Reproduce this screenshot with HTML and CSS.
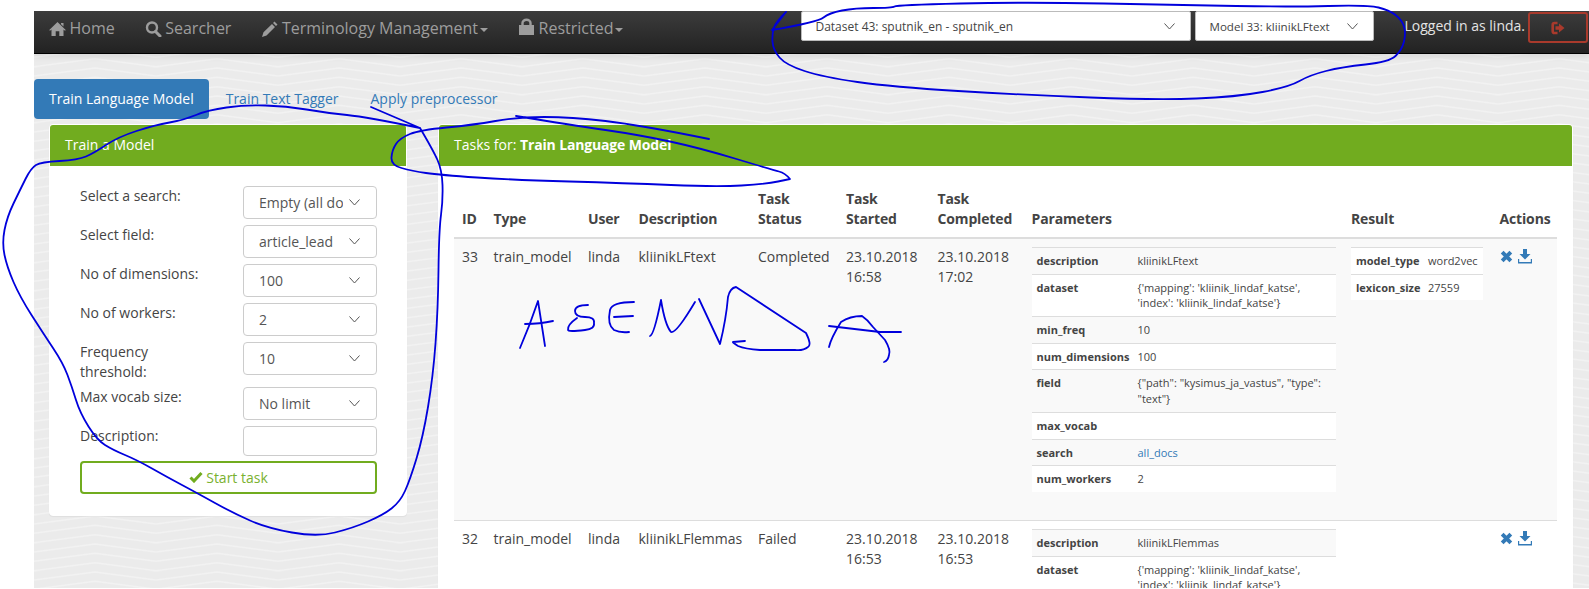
FILE: index.html
```html
<!DOCTYPE html>
<html lang="en">
<head>
<meta charset="utf-8">
<title>Train Language Model</title>
<link rel="stylesheet" href="styles.css">
</head>
<body>
<div class="app">
  <nav class="navbar">
    <ul class="nav-list">
      <li class="nav-item"><svg class="nav-icon" viewBox="0 0 17 16"><path d="M8.5 1 17 9.2 15.6 9.4 14.5 8.6V15H10.3V10.3H6.7V15H2.5V8.6L1.4 9.4 0 9.2 8.5 1ZM12 2H14.5V5.5L12 3.2Z"/></svg>Home</li>
      <li class="nav-item"><svg class="nav-icon" viewBox="0 0 17 16"><circle cx="7" cy="6.5" r="5" fill="none" stroke-width="2.4"/><path d="M10.5 10.5 15 15" fill="none" stroke-width="3" stroke-linecap="round"/></svg>Searcher</li>
      <li class="nav-item"><svg class="nav-icon" viewBox="0 0 17 16"><path d="M13.5 .5 16.5 3.5 15 5 12 2ZM11 3 14 6 5.5 14.5 1 16 2.5 11.2Z"/></svg>Terminology Management<span class="caret"></span></li>
      <li class="nav-item"><svg class="nav-icon nav-icon-lock" viewBox="0 0 17 16"><path d="M1 6H16V16H1Z"/><path d="M4.500 6V4A4 3.200 0 0 1 12.500 4V6" fill="none" stroke-width="2.400"/></svg>Restricted<span class="caret"></span></li>
    </ul>
    <div class="nav-right">
      <select class="nav-select nav-select-dataset"><option>Dataset 43: sputnik_en - sputnik_en</option></select>
      <select class="nav-select nav-select-model"><option>Model 33: kliinikLFtext</option></select>
      <span class="nav-user">Logged in as linda.</span>
      <button class="logout" type="button"><svg class="logout-icon" viewBox="0 0 14 14"><path d="M6.500 2H3.500A1.800 1.800 0 0 0 1.700 3.800V10.200A1.800 1.800 0 0 0 3.500 12H6.500" fill="none" stroke-width="2.600"/><path d="M4.500 5.300H8V2.500L13.500 7 8 11.500V8.700H4.500Z" stroke="none"/></svg></button>
    </div>
  </nav>

  <ul class="pills">
    <li class="pill pill-active">Train Language Model</li>
    <li class="pill">Train Text Tagger</li>
    <li class="pill">Apply preprocessor</li>
  </ul>

  <div class="columns">
    <section class="panel panel-form">
      <h2 class="panel-head">Train a Model</h2>
      <form class="form">
        <label class="form-label">Select a search:</label>
        <div class="form-field"><select class="control"><option>Empty (all docs)</option></select></div>
        <label class="form-label">Select field:</label>
        <div class="form-field"><select class="control"><option>article_lead</option></select></div>
        <label class="form-label">No of dimensions:</label>
        <div class="form-field"><select class="control"><option>100</option></select></div>
        <label class="form-label">No of workers:</label>
        <div class="form-field"><select class="control"><option>2</option></select></div>
        <label class="form-label">Frequency threshold:</label>
        <div class="form-field"><select class="control"><option>10</option></select></div>
        <label class="form-label">Max vocab size:</label>
        <div class="form-field"><select class="control"><option>No limit</option></select></div>
        <label class="form-label form-label-last">Description:</label>
        <div class="form-field form-field-last"><input class="control control-input" type="text"></div>
        <button class="start" type="button"><svg class="start-icon" viewBox="0 0 14 12"><path d="M1.500 6.500 5 10 12.500 2" fill="none" stroke-width="3"/></svg>Start task</button>
      </form>
    </section>

    <section class="panel panel-tasks">
      <h2 class="panel-head">Tasks for: <strong>Train Language Model</strong></h2>
      <div class="panel-body">
        <table class="tasks">
          <colgroup>
            <col class="c-id"><col class="c-type"><col class="c-user"><col class="c-desc"><col class="c-status"><col class="c-started"><col class="c-completed"><col class="c-params"><col class="c-result"><col class="c-actions">
          </colgroup>
          <thead>
            <tr><th>ID</th><th>Type</th><th>User</th><th>Description</th><th>Task Status</th><th>Task Started</th><th>Task Completed</th><th>Parameters</th><th>Result</th><th>Actions</th></tr>
          </thead>
          <tbody>
            <tr class="row-odd">
              <td>33</td><td>train_model</td><td>linda</td><td>kliinikLFtext</td><td>Completed</td><td>23.10.2018 16:58</td><td>23.10.2018 17:02</td>
              <td>
                <table class="kv kv-params">
                  <tr><th>description</th><td>kliinikLFtext</td></tr>
                  <tr><th>dataset</th><td>{'mapping': 'kliinik_lindaf_katse', 'index': 'kliinik_lindaf_katse'}</td></tr>
                  <tr><th>min_freq</th><td>10</td></tr>
                  <tr><th>num_dimensions</th><td>100</td></tr>
                  <tr><th>field</th><td>{"path": "kysimus_ja_vastus", "type": "text"}</td></tr>
                  <tr><th>max_vocab</th><td></td></tr>
                  <tr><th>search</th><td><a class="link" href="#">all_docs</a></td></tr>
                  <tr><th>num_workers</th><td>2</td></tr>
                </table>
              </td>
              <td>
                <table class="kv kv-result">
                  <tr><th>model_type</th><td>word2vec</td></tr>
                  <tr><th>lexicon_size</th><td>27559</td></tr>
                </table>
              </td>
              <td>
                <div class="actions">
                  <svg class="act-x" viewBox="0 0 12 12"><path d="M2 2 10 10M10 2 2 10" stroke-width="3.600" fill="none"/></svg>
                  <svg class="act-dl" viewBox="0 0 14 15"><path d="M5 0H9V5H12.500L7 10.500 1.500 5H5Z" stroke="none"/><path d="M.5 10V13.800H13.500V10" fill="none" stroke-width="1.400"/></svg>
                </div>
              </td>
            </tr>
            <tr>
              <td>32</td><td>train_model</td><td>linda</td><td>kliinikLFlemmas</td><td>Failed</td><td>23.10.2018 16:53</td><td>23.10.2018 16:53</td>
              <td>
                <table class="kv kv-params">
                  <tr><th>description</th><td>kliinikLFlemmas</td></tr>
                  <tr><th>dataset</th><td>{'mapping': 'kliinik_lindaf_katse', 'index': 'kliinik_lindaf_katse'}</td></tr>
                </table>
              </td>
              <td></td>
              <td>
                <div class="actions">
                  <svg class="act-x" viewBox="0 0 12 12"><path d="M2 2 10 10M10 2 2 10" stroke-width="3.600" fill="none"/></svg>
                  <svg class="act-dl" viewBox="0 0 14 15"><path d="M5 0H9V5H12.500L7 10.500 1.500 5H5Z" stroke="none"/><path d="M.5 10V13.800H13.500V10" fill="none" stroke-width="1.400"/></svg>
                </div>
              </td>
            </tr>
          </tbody>
        </table>
      </div>
    </section>
  </div>
</div>

<svg class="scribble" viewBox="0 0 1589 589" aria-hidden="true">
  <path d="M786,12 L772,30 Q818,22 823.500,17.500 Q829,13 842,10.500 Q855,8 873.500,8 Q892,8 894.500,6.500 Q897,5 960.500,3.500 Q1024,2 1103.500,3.500 Q1183,5 1236,6 Q1289,7 1328.500,6 Q1368,5 1378.500,7.500 Q1389,10 1395.500,15 Q1402,20 1404,26.500 Q1406,33 1404,41.500 Q1402,50 1395.500,56 Q1389,62 1365.500,64.500 Q1342,67 1326,71 Q1310,75 1299.500,81 Q1289,87 1262.500,92 Q1236,97 1196.500,98.500 Q1157,100 1090.500,97.500 Q1024,95 958,91 Q892,87 857.500,82 Q823,77 804.500,71 Q786,65 779.500,57.500 Q773,50 772.500,41.500 Q772,33 774,27.500 Q776,22 786,12"/>
  <path d="M371,107 L420,128 Q433,150 437.500,160 Q442,170 442.500,185 Q443,200 441,215 Q439,230 438.500,270 Q438,310 435.500,343.500 Q433,377 428,407 Q423,437 416.500,458.500 Q410,480 405,491 Q400,502 391.500,508.500 Q383,515 368,521.500 Q353,528 335,532.500 Q317,537 292,532.500 Q267,528 250,520.500 Q233,513 215,503 Q197,493 182,485 Q167,477 152,468.500 Q137,460 125,455 Q113,450 105,445 Q97,440 88.500,426.500 Q80,413 76,400 Q72,387 67.500,375 Q63,363 53,348 Q43,333 31.500,315 Q20,297 13.500,282 Q7,267 4.500,255 Q2,243 4.500,230 Q7,217 13.500,203.500 Q20,190 25.500,179 Q31,168 36,165 Q41,162 59.500,161 Q78,160 86,156.500 Q94,153 106,145 Q118,137 136.500,131 Q155,125 169.500,122.500 Q184,120 196,115 Q208,110 226.500,107.500 Q245,105 265.500,105.500 Q286,106 306.500,109.500 Q327,113 347,115 Q367,117 420,128"/>
  <path d="M709,139 Q640,125 605.500,121 Q571,117 544.500,117 Q518,117 495.500,121 Q473,125 446.500,127.500 Q420,130 410,134 Q400,138 396,144 Q392,150 391.500,157.500 Q391,165 401.500,168 Q412,171 426,173 Q440,175 477,177.500 Q514,180 569.500,181.500 Q625,183 671,185 Q717,187 741.500,185.500 Q766,184 778,181.500 L790,179 Q785,173 779,171.500 Q773,170 736.500,159 Q700,148 670,141.500 Q640,135 605.500,130 Q571,125 516,116"/>
  <path d="M520,348 Q530,325 538,301 Q541,320 545,346"/>
  <path d="M525,324 Q540,324 553,321"/>
  <path d="M588,305 Q575,305 575,311 Q575,317 585,317 Q595,317 594,323 Q595,329 585,330 Q568,332 568,330 Q567,325 577,318"/>
  <path d="M634,302 Q612,302 610,310 Q607,325 614,330 Q620,333 629,332"/>
  <path d="M614,317 L633,316"/>
  <path d="M650,336 Q654,335 661,300 Q665,325 671,332 Q676,334 695,302"/>
  <path d="M699,299 L720,344 Q726,320 728,297 Q730,288 736,287 L806,333 Q812,345 808,347 Q803,351 795,350 L760,350 Q745,349 738,346 Q732,342 733,342 L745,341"/>
  <path d="M829,347 Q831,338 841,322 Q850,316 862,316 Q868,320 873,327 L885,340 Q891,350 889,355 Q888,361 884,362"/>
  <path d="M829,326 L880,332 L901,332"/>
</svg>
</body>
</html>
```
FILE: styles.css
```css
* { box-sizing: border-box; }

html, body { margin: 0; padding: 0; height: 100%; overflow: hidden; background: #fff; }

body {
  position: relative;
  font-family: "Open Sans", "Liberation Sans", sans-serif;
  font-size: 14px;
  line-height: 1.42857;
  color: #444;
}

.app {
  margin: 11px 0 0 34px;
  height: 577px;
  overflow: hidden;
  background-color: #ebebeb;
  background-image: url("data:image/svg+xml,%3Csvg xmlns='http://www.w3.org/2000/svg' width='122' height='28'%3E%3Cg fill='none' stroke='%23f2f2f2' stroke-width='1.5'%3E%3Cpath d='M0 9 61 1 122 9M0 18.330 61 10.330 122 18.330M0 27.670 61 19.670 122 27.670M0 0 61 -8 122 0'/%3E%3C/g%3E%3C/svg%3E");
}

/* navbar */
.navbar {
  display: flex;
  justify-content: space-between;
  height: 43px;
  background: linear-gradient(#3c3c3c, #222);
  border-bottom: 1px solid #000;
  box-shadow: 0 3px 6px rgba(0, 0, 0, .08);
}

.nav-list { display: flex; list-style: none; margin: 0; padding: 0; }

.nav-item {
  display: flex;
  align-items: center;
  height: 35px;
  padding: 0 15px;
  font-size: 16px;
  color: #9d9d9d;
}

.nav-icon {
  width: 17px;
  height: 16px;
  margin-right: 3.5px;
  fill: #9d9d9d;
  stroke: #9d9d9d;
  stroke-width: 0;
}

.nav-icon-lock { height: 18px; margin-top: -3px; }

.caret {
  width: 0;
  height: 0;
  margin-left: 2px;
  margin-top: 3px;
  border-top: 4px solid #9d9d9d;
  border-left: 4px solid transparent;
  border-right: 4px solid transparent;
}

.nav-right { display: flex; align-items: flex-start; padding-right: 1px; }

.nav-select {
  appearance: none;
  height: 30px;
  padding: 0 30px 0 13px;
  border: 1px solid #bbb;
  border-radius: 2px;
  font-family: inherit;
  font-size: 12px;
  color: #444;
  background: #fff url("data:image/svg+xml,%3Csvg xmlns='http://www.w3.org/2000/svg' width='11' height='7'%3E%3Cpath d='M.5 .5 5.500 6 10.500 .5' fill='none' stroke='%23555'/%3E%3C/svg%3E") no-repeat right 15px center;
}

.nav-select-dataset { width: 390px; margin-right: 4px; }
.nav-select-model { width: 179px; font-size: 11.6px; }

.nav-user { margin: 5px 3px 0 30px; color: #e4e4e4; }

.logout {
  width: 60px;
  height: 31px;
  margin-top: 1px;
  padding: 0;
  display: flex;
  align-items: center;
  justify-content: center;
  background: transparent;
  border: 2px solid #a93a2c;
  border-radius: 3px;
}

.logout-icon { width: 14px; height: 14px; fill: #a93a2c; stroke: #a93a2c; }

/* pills */
.pills { display: flex; gap: 2px; list-style: none; margin: 25px 0 5px; padding: 0; }

.pill { padding: 10px 15px; height: 40px; border-radius: 4px; color: #337ab7; }
.pill-active { background: #337ab7; color: #fff; }

/* panels */
.columns { display: flex; align-items: flex-start; gap: 31px; padding-left: 15px; }

.panel { background: #fff; border: 1px solid #fff; border-radius: 4px; box-shadow: 0 1px 1px rgba(0, 0, 0, .05); }
.panel-form { width: 358px; }
.panel-tasks { width: 1135px; }

.panel-head {
  margin: 0;
  padding: 10px 15px;
  height: 41px;
  font-size: 14px;
  font-weight: 400;
  color: #fff;
  background: #71ac1f;
  border-radius: 3px 3px 0 0;
}

.panel-head strong { letter-spacing: -.15px; }

/* form */
.form {
  display: grid;
  grid-template-columns: 163px 134px;
  padding: 20px 28px 21px 30px;
}

.form-label { padding: 0 30px 5px 0; }
.form-field { padding-bottom: 6px; }
.form-label-last { padding-bottom: 0; }
.form-field-last { padding-bottom: 5px; }

.control {
  display: block;
  width: 100%;
  height: 33px;
  padding: 0 33px 0 15px;
  appearance: none;
  border: 1px solid #ccc;
  border-radius: 4px;
  font-family: inherit;
  font-size: 14px;
  color: #555;
  background: #fff url("data:image/svg+xml,%3Csvg xmlns='http://www.w3.org/2000/svg' width='11' height='7'%3E%3Cpath d='M.5 .5 5.500 6 10.500 .5' fill='none' stroke='%23555'/%3E%3C/svg%3E") no-repeat right 16px center;
}

.control-input { height: 30px; padding: 0 10px; background-image: none; }

.start {
  grid-column: 1 / -1;
  display: flex;
  align-items: center;
  justify-content: center;
  height: 33px;
  background: #fff;
  border: 2px solid #71ac1f;
  border-radius: 4px;
  font-family: inherit;
  font-size: 14px;
  color: #7ab12f;
}

.start-icon { width: 14px; height: 12px; margin-right: 3px; stroke: #71ac1f; }

/* tasks table */
.panel-body { padding: 15px 0 0 15px; }

.tasks { table-layout: fixed; width: 1103px; border-collapse: collapse; border-spacing: 0; }

.c-id { width: 31.5px; }
.c-type { width: 94.5px; }
.c-user { width: 50.5px; }
.c-desc { width: 119.5px; }
.c-status { width: 88px; }
.c-started { width: 91.5px; }
.c-completed { width: 94px; }
.c-params { width: 319.5px; }
.c-result { width: 148.5px; }
.c-actions { width: 65.5px; }

.tasks > thead > tr > th {
  padding: 8px;
  text-align: left;
  vertical-align: bottom;
  font-weight: 700;
  letter-spacing: -.15px;
  border-bottom: 2px solid #ddd;
}

.tasks > tbody > tr > td {
  padding: 8px;
  vertical-align: top;
  border-top: 1px solid #ddd;
}

.tasks > tbody > tr:first-child > td { border-top: 0; }

.row-odd { background: #f9f9f9; }

.kv { border-collapse: collapse; margin-bottom: 20px; font-size: 11px; background: #fff; }
.kv th, .kv td { padding: 5px; text-align: left; vertical-align: top; border-top: 1px solid #ddd; }
.kv th { font-weight: 700; }
.kv tr:nth-child(odd) { background: #f9f9f9; }
.kv-params { table-layout: fixed; width: 304px; }
.kv-params th { width: 101px; }
.kv-result { table-layout: fixed; width: 132px; }
.kv-result th { width: 72px; }
.kv-result td, .kv-result th { background: #fff; white-space: nowrap; }

.link { color: #337ab7; text-decoration: none; }

.actions { display: flex; align-items: flex-start; gap: 5px; margin-top: 2px; }
.act-x { width: 13px; height: 13px; margin-top: 1px; stroke: #337ab7; }
.act-dl { width: 14px; height: 15px; fill: #337ab7; stroke: #337ab7; }

/* pen annotations drawn on top of the screenshot */
.scribble { position: absolute; left: 0; top: 0; width: 1589px; height: 589px; pointer-events: none; }
.scribble path { fill: none; stroke: #0000dc; stroke-width: 1.8; stroke-linejoin: round; stroke-linecap: round; }
```
